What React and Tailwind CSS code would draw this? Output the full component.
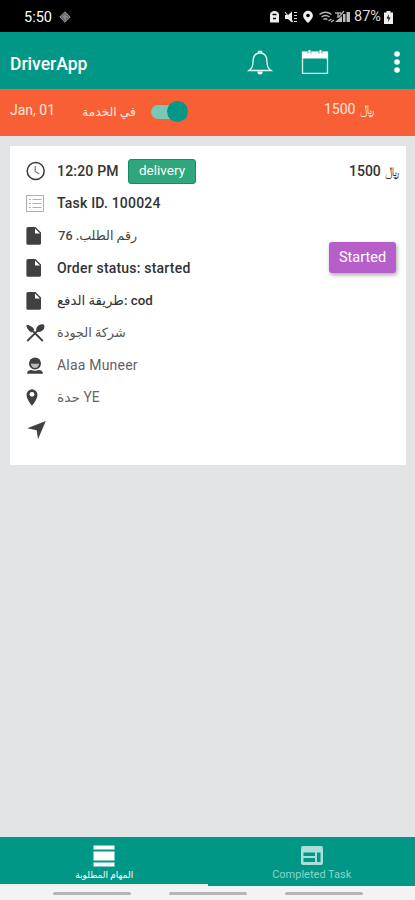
const rows = [
  { icon: 'list', text: 'Task ID. 100024', style: 'text-[14px] font-medium text-[#333] w-[104px] tracking-[0.2px] pb-[2px]' },
  { icon: 'file', text: 'رقم الطلب. 76', rtl: true, style: 'text-[12.6px] font-medium text-[#444] w-[80px]' },
  { icon: 'file', text: 'Order status: started', style: 'text-[14px] font-medium text-[#333] w-[134px] tracking-[0.2px]' },
  { icon: 'file', text: 'طريقة الدفع: cod', style: 'text-[13.3px] font-medium text-[#333] w-[95px]' },
  { icon: 'food', text: 'شركة الجودة', style: 'text-[12.8px] text-[#555] w-[70px]' },
  { icon: 'person', text: 'Alaa Muneer', style: 'text-[14px] text-[#626262] w-[81px] tracking-[0.2px] pb-[2px]' },
  { icon: 'pin', text: 'حدة YE', style: 'text-[13.8px] text-[#666] w-[43px]' },
  { icon: 'send', text: '', style: '' },
]

// Label with a fixed width, Latin in Roboto and Arabic in DejaVu
function Label({ children, rtl, style }) {
  return (
    <span
      dir={rtl ? 'rtl' : 'ltr'}
      className={`flex shrink-0 justify-start whitespace-nowrap font-['Roboto','DejaVu_Sans',sans-serif] leading-none ${style}`}
    >
      <bdi dir={rtl ? 'rtl' : 'ltr'}>{children}</bdi>
    </span>
  )
}

function RowIcon({ name }) {
  return (
    <svg width="22" height="22" viewBox="0 0 22 22" fill="#404040" className="shrink-0">
      {name === 'clock' && (
        <g fill="none" stroke="#383838" transform="translate(.7 0)">
          <circle cx="11" cy="11" r="8.5" strokeWidth="1.5" />
          <path d="M10.5 6v5.5l4 2.5" strokeWidth="1.2" stroke="#777" />
        </g>
      )}
      {name === 'list' && (
        <g fill="none" stroke="#b0b0b0">
          <rect x="2.5" y="2.5" width="17" height="16" strokeWidth="1" />
          <path d="M5 6.500h2M8.500 6.500h9M5 10.500h2M8.500 10.500h9M5 14.500h2M8.500 14.500h9" strokeWidth="1.1" />
        </g>
      )}
      {name === 'file' && (
        <>
          <path d="M4 2h7.500l5.500 5.500V18.200a1.6 1.6 0 0 1-1.600 1.600H4A1.600 1.600 0 0 1 2.400 18.200V3.600A1.600 1.600 0 0 1 4 2z" />
          <path d="M11 3.500v5h5z" fill="#fff" />
        </>
      )}
      {name === 'food' && (
        <>
          <path d="M2.300 3c3.500.2 6 1.500 8 4.500l-2.800 3C4.300 9 2.700 6 2.300 3z" />
          <path d="M3.300 3.500L18.800 19M3.300 19L14.800 7.500" stroke="#404040" strokeWidth="1.800" />
          <path d="M12.800 9.500C11.300 7 12.800 4.500 15.300 3c2-1.200 4.500-.8 5 .5.600 2-.5 4.500-2.500 5.500-1.700.9-3.600 1.300-5 .5z" />
        </>
      )}
      {name === 'person' && (
        <>
          <circle cx="11" cy="8.400" r="6" />
          <path d="M7 8.500c2.500.4 5.500.4 8 0 0 2.800-1.600 4.600-4 4.600s-4-1.800-4-4.600z" fill="#bbb" />
          <path d="M3 18.800c0-2.400 1.500-3.400 4.500-3.700 2 1 5 1 7 0 3 .3 4.500 1.300 4.500 3.700z" />
        </>
      )}
      {name === 'pin' && (
        <>
          <path d="M8 2.300a5.500 5.500 0 0 1 5.500 5.500C13.500 12 8.800 18.200 8 18.700c-.8-.5-5.500-6.700-5.500-10.900A5.500 5.500 0 0 1 8 2.300z" />
          <circle cx="8" cy="7.300" r="2.400" fill="#fff" />
        </>
      )}
      {name === 'send' && <path d="M21.800 2L14 20.300l-1.300-9L3.300 9.300z" />}
    </svg>
  )
}

function StatusBar() {
  return (
    <div className="flex h-8 items-center bg-black pl-6 pr-[22px] pt-[2px] text-white">
      <span className="w-[30px] pt-[3px] text-[14.500px] leading-none">5:50</span>
      <svg width="12" height="12" viewBox="0 0 12 12" className="ml-[5px]" fill="none" stroke="#999">
        <path d="M6 .8L11.200 6 6 11.200.8 6z" fill="#666" />
        <path d="M3 6h6M6 3v6" />
      </svg>
      <svg width="83" height="14" viewBox="0 0 83 14" className="ml-auto" fill="#eee">
        {/* data saver */}
        <path d="M1 5a4.500 4 0 0 1 9 0v7.500H1z" />
        <path d="M3.500 4.500h4M4 8.500h3" stroke="#000" strokeWidth="1.300" />
        {/* muted speaker */}
        <path d="M16 5h3l4-3.500v11L19 9h-3z" />
        <path d="M16 2l8 10M25 2.500h3M25 5.500h3M25 8.500h3M25 11.500h3" stroke="#ddd" strokeWidth="1.200" />
        {/* location */}
        <path d="M39 .8a4.900 4.900 0 0 1 4.900 4.900C43.900 8.500 40 12 39 13c-1-1-4.900-4.500-4.900-7.300A4.900 4.900 0 0 1 39 .8z" />
        <circle cx="39" cy="5.500" r="1.800" fill="#000" />
        {/* wifi */}
        <g fill="none" stroke="#bbb" strokeWidth="1.400">
          <path d="M50.500 4.500c4-3 8-3 12 0M52.500 7c3-2.200 5-2.200 8 0M54.500 9.500c1.500-1 2.500-1 4 0M59.500 11l3-2M62 12l3-2" />
        </g>
        {/* mobile signal */}
        <path d="M66 3h6M69 3v5M70 7l5-6" stroke="#aaa" strokeWidth="1.500" />
        <path d="M66 12l7-6v6zM74 4h2.500v8H74zM77.500 2H81v10h-3.500z" fill="#bbb" />
      </svg>
      <span className="ml-[2px] w-[29px] whitespace-nowrap text-[14.500px] leading-none text-[#ddd]">87%</span>
      <svg width="9" height="13" viewBox="0 0 9 13" className="ml-px" fill="#eee">
        <path d="M2.500 0h4v1.500H9V13H0V1.500h2.500z" />
        <path d="M5 3L2.500 7.500h2L4 11l2.500-4.500h-2z" fill="#000" />
      </svg>
    </div>
  )
}

function AppBar() {
  return (
    <header className="flex h-[57px] items-center bg-[#009787] pl-[10px] text-white">
      <h1 className="w-20 pt-[9px] text-[17.500px] font-medium leading-none">DriverApp</h1>
      <svg width="26" height="28" viewBox="0 0 26 28" className="ml-[157px] mt-[2px]" fill="none" stroke="#e8f6f4" strokeWidth="1.300">
        <path d="M2 22.500c3-2 4-4 4-8.500 0-6 2.500-9 7-9s7 3 7 9c0 4.500 1 6.500 4 8.500z" />
        <path d="M11.500 5V3.500h3V5" />
        <path d="M10.300 23.500h5.400c0 2-1 3-2.700 3s-2.700-1-2.700-3z" fill="#fff" stroke="none" />
      </svg>
      <svg width="28" height="28" viewBox="0 0 28 28" className="ml-[28px] mt-[2px]">
        <path d="M1.500 4.500h25v20.800h-25z" fill="none" stroke="#d9f0ed" strokeWidth="1.300" />
        <path d="M1 3.500h26v7H1z" fill="#fff" />
        <path d="M8.500 2v4M19.500 2v4" stroke="#fff" strokeWidth="2" />
        <path d="M7 3.500v2M10 3.500v2M18 3.500v2M21 3.500v2" stroke="#009787" strokeWidth=".8" />
      </svg>
      <svg width="8" height="24" viewBox="0 0 8 24" className="ml-[64px] mt-[2px]" fill="#fff">
        <circle cx="4" cy="4" r="2.800" />
        <circle cx="4" cy="12" r="2.800" />
        <circle cx="4" cy="20" r="2.800" />
      </svg>
    </header>
  )
}

function DutyBar() {
  return (
    <div className="flex h-[47px] items-start bg-[#f95f35] pl-[10px] text-[#ffe9df]">
      <span className="w-[46px] whitespace-nowrap pt-[14px] text-[14px] leading-none">Jan, 01</span>
      <div className="ml-[26px] pt-[17px]">
        <Label style="text-[12.3px] w-[54px]">في الخدمة</Label>
      </div>
      <div className="ml-[15px] mt-[12px] flex h-[21px] w-[37px] items-center">
        <div className="flex h-[14px] w-[34px] items-center rounded-full bg-[#79c7b5]">
          <div className="ml-[16px] size-[21px] shrink-0 rounded-full bg-[#009787]" />
        </div>
      </div>
      <div className="ml-auto mr-[41px] flex items-center pt-[13px]">
        <span className="w-[32px] text-[14px] leading-none">1500</span>
        <span className="ml-1 w-[14px] font-['DejaVu_Sans',sans-serif] text-[13px] leading-none">﷼</span>
      </div>
    </div>
  )
}

function TaskCard() {
  return (
    <section className="ml-[10px] mr-[9px] mt-[10px] flex h-[319px] bg-white pl-[14px] pt-[9px]">
      <div className="flex flex-1 flex-col">
        <div className="flex h-[32.400px] items-center">
          <RowIcon name="clock" />
          <span className="ml-[11px] w-[63px] whitespace-nowrap text-[14px] font-medium leading-none tracking-[0.2px] text-[#333]">
            12:20 PM
          </span>
          <span className="ml-2 flex h-[25px] w-[68px] items-center justify-center rounded-[3px] border border-[#168e65] bg-[#2da77b] text-[13.500px] leading-none text-white">
            delivery
          </span>
        </div>
        {rows.map((r, i) => (
          <div key={i} className="flex h-[32.400px] items-center">
            <RowIcon name={r.icon} />
            <div className="ml-[11px]">
              <Label rtl={r.rtl} style={r.style}>{r.text}</Label>
            </div>
          </div>
        ))}
      </div>
      <div className="flex flex-col items-end">
        <div className="mr-[7px] flex h-[32.400px] items-center text-[#333]">
          <span className="w-[32px] text-[14px] font-medium leading-none">1500</span>
          <span className="ml-1 w-[14px] font-['DejaVu_Sans',sans-serif] text-[13px] leading-none">﷼</span>
        </div>
        <button className="mr-[10px] mt-[55px] h-[31px] w-[67px] rounded-[3px] bg-[#b65fc9] pt-px text-[14.500px] leading-none text-white shadow-[1px_2px_4px_rgba(0,0,0,0.35)]">
          Started
        </button>
      </div>
    </section>
  )
}

function BottomTabs() {
  return (
    <nav className="grid h-[49px] grid-cols-2 bg-[#009787]">
      <div className="flex flex-col items-center border-b-2 border-[#e8f4f2] pt-[8px] text-white">
        <svg width="22" height="22" viewBox="0 0 22 22" fill="#fff">
          <path d="M.5.500h21v4H.5zM.5 6.500h21v9H.5zM.5 17.500h21v4H.5z" />
        </svg>
        <div className="mt-[4px]">
          <Label style="text-[9px] w-[57px]">المهام المطلوبة</Label>
        </div>
      </div>
      <div className="flex flex-col items-center pl-px pt-[9px] text-[#8fd3ca]">
        <svg width="22" height="20" viewBox="0 0 22 20">
          <rect width="22" height="19" rx="2" fill="#a9dfd6" />
          <path d="M2.500 6.500h11.500v3.500H2.500zM2.500 12h11.500v4H2.500zM16 6.500h3.500V16H16z" fill="#009787" />
        </svg>
        <span className="mt-[3px] whitespace-nowrap text-[11px] leading-none">Completed Task</span>
      </div>
    </nav>
  )
}

export default function App() {
  return (
    <div className="flex h-[900px] w-[415px] flex-col overflow-hidden bg-[#e2e4e6] font-['Roboto',sans-serif]">
      <StatusBar />
      <AppBar />
      <DutyBar />
      <TaskCard />
      <div className="flex-1" />
      <BottomTabs />
      <div className="flex h-[14px] gap-[38px] bg-[#f3f3f3] pl-[53px] pt-[6px]">
        <div className="h-[3px] w-[78px] rounded-full bg-[#b5b5b5]" />
        <div className="h-[3px] w-[78px] rounded-full bg-[#b5b5b5]" />
        <div className="h-[3px] w-[78px] rounded-full bg-[#b5b5b5]" />
      </div>
    </div>
  )
}
